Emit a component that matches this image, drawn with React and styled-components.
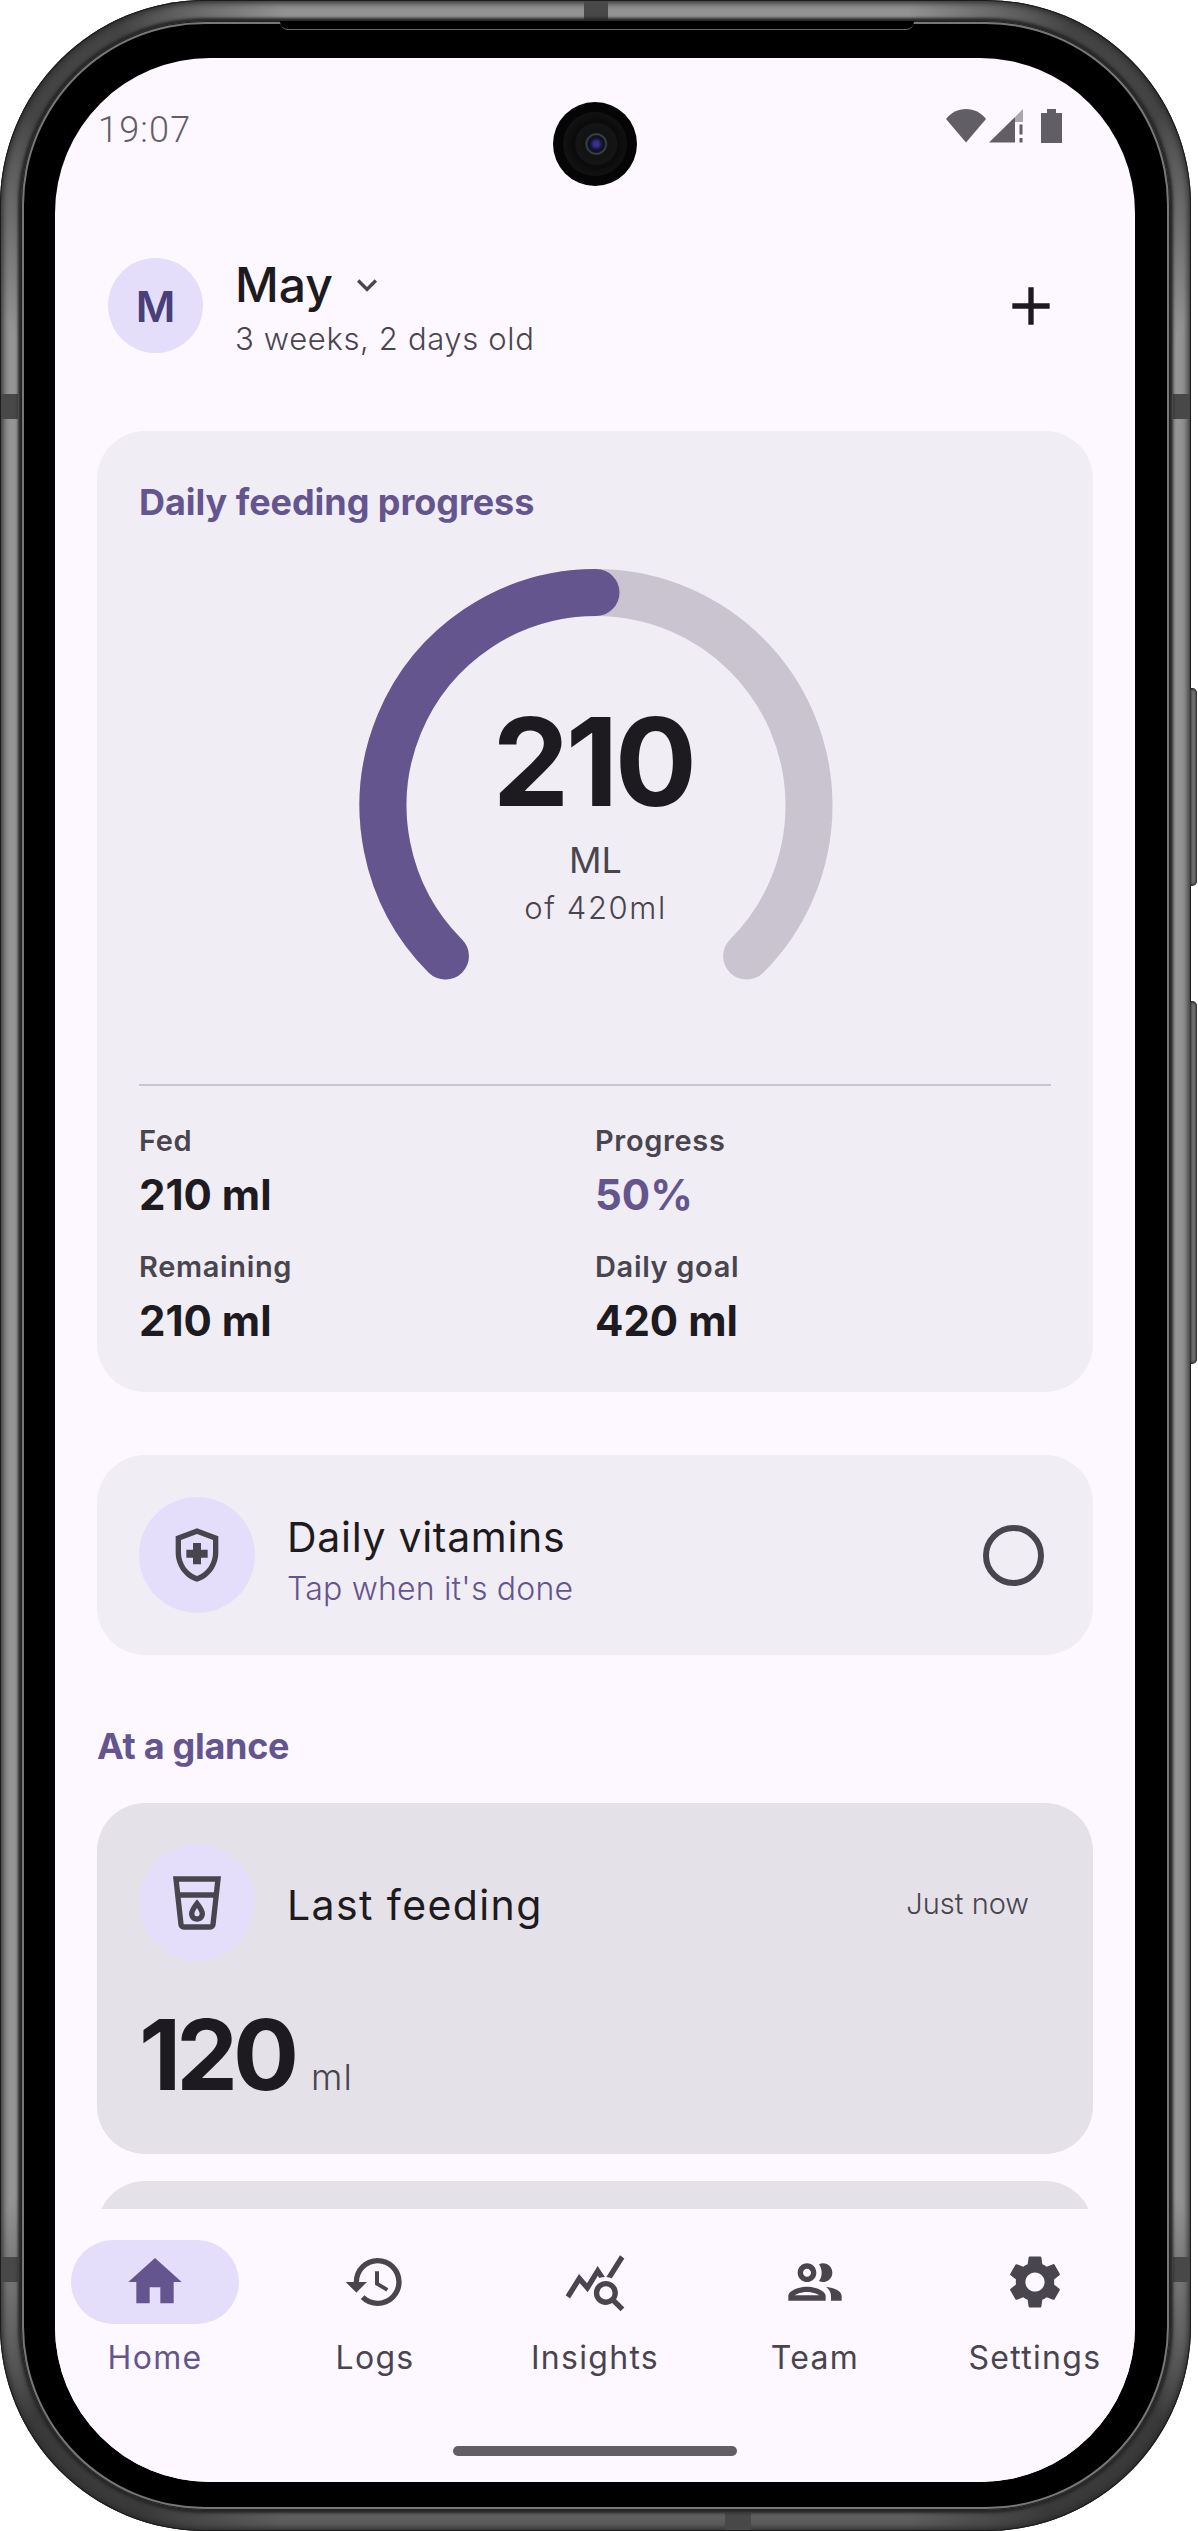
import React from "react";
import styled, { createGlobalStyle } from "styled-components";
import {
  MdAdd,
  MdExpandMore,
  MdHistory,
  MdHome,
  MdOutlineGroup,
  MdOutlineHealthAndSafety,
  MdOutlineLocalDrink,
  MdQueryStats,
  MdSettings,
} from "react-icons/md";

const INK = "#1d1b20";
const MUTED = "#49454f";
const PURPLE = "#65558f";
const TRACK = "#cac4d0";
const PALE = "#e5defa";
const SURFACE = "#fdf8ff";
const FONT = `"Inter", "Noto Sans", sans-serif`;

const GlobalStyle = createGlobalStyle`
  html, body {
    margin: 0;
    background: #fff;
  }
  body {
    font-family: ${FONT};
    color: ${INK};
  }
`;

const stats = [
  { label: "Fed", value: "210 ml" },
  { label: "Progress", value: "50%", accent: true },
  { label: "Remaining", value: "210 ml" },
  { label: "Daily goal", value: "420 ml" },
];

const tabs = [
  { label: "Home", Icon: MdHome, active: true },
  { label: "Logs", Icon: MdHistory },
  { label: "Insights", Icon: MdQueryStats },
  { label: "Team", Icon: MdOutlineGroup },
  { label: "Settings", Icon: MdSettings },
];

function StatusIcons() {
  return (
    <svg width="117" height="34" viewBox="0 0 117 34">
      <path d="M0 10C5 3.500 12 0 20 0s15 3.500 20 10L20 33.500z" fill="#625e66" />
      <path d="M43 33.500 69 8v25.500z" fill="#625e66" />
      <path d="M69 8l8-8v13h-8z" fill="#a9a6ac" />
      <path d="M73.500 15.500h3v10h-3zM73.500 29h3v4.500h-3z" fill="#625e66" />
      <path d="M101 0h9v4h6v30H95V4h6z" fill="#625e66" />
    </svg>
  );
}

function Gauge() {
  return (
    <svg width="474" height="412" viewBox="0 0 474 412">
      <path
        d="M86.400 387.100A213 213 0 1 1 387.600 387.100"
        fill="none"
        stroke={TRACK}
        strokeWidth="47"
        strokeLinecap="round"
      />
      <path
        d="M86.400 387.100A213 213 0 0 1 237 23.500"
        fill="none"
        stroke={PURPLE}
        strokeWidth="47"
        strokeLinecap="round"
      />
    </svg>
  );
}

export default function App() {
  return (
    <>
      <GlobalStyle />
      <Phone>
        <SideKey $top={688} $height={198} />
        <SideKey $top={1001} $height={363} />
        <Band $left={1} $top={394} $width={17} $height={25} />
        <Band $left={1173} $top={394} $width={17} $height={25} />
        <Band $left={1} $top={2257} $width={17} $height={25} />
        <Band $left={1173} $top={2257} $width={17} $height={25} />
        <Band $left={584} $top={1} $width={24} $height={19} />
        <Band $left={725} $top={2513} $width={26} $height={17} />
        <Bezel>
          <EarpieceLine />
          <Screen>
            <Camera>
              <Lens />
            </Camera>
            <StatusBar>
              <Clock>19:07</Clock>
              <StatusIcons />
            </StatusBar>
            <Content>
              <Header>
                <Avatar>M</Avatar>
                <BabyInfo>
                  <BabyName>
                    May
                    <MdExpandMore size={40} color={MUTED} />
                  </BabyName>
                  <BabyAge>3 weeks, 2 days old</BabyAge>
                </BabyInfo>
                <MdAdd size={64} color={INK} />
              </Header>

              <ProgressCard>
                <CardTitle>Daily feeding progress</CardTitle>
                <GaugeStack>
                  <Gauge />
                  <GaugeText>
                    <GaugeValue>210</GaugeValue>
                    <GaugeUnit>ML</GaugeUnit>
                    <GaugeGoal>of 420ml</GaugeGoal>
                  </GaugeText>
                </GaugeStack>
                <Divider />
                <StatGrid>
                  {stats.map((stat) => (
                    <div key={stat.label}>
                      <StatLabel>{stat.label}</StatLabel>
                      <StatValue $accent={stat.accent}>{stat.value}</StatValue>
                    </div>
                  ))}
                </StatGrid>
              </ProgressCard>

              <VitaminCard>
                <IconCircle>
                  <MdOutlineHealthAndSafety size={64} color={MUTED} />
                </IconCircle>
                <VitaminText>
                  <RowTitle $tracking={0.7}>Daily vitamins</RowTitle>
                  <VitaminHint>Tap when it's done</VitaminHint>
                </VitaminText>
                <Radio />
              </VitaminCard>

              <SectionTitle>At a glance</SectionTitle>

              <GlanceCard>
                <GlanceTop>
                  <IconCircle>
                    <MdOutlineLocalDrink size={64} color={MUTED} />
                  </IconCircle>
                  <FeedingTitle $tracking={1.4}>Last feeding</FeedingTitle>
                  <GlanceTime>Just now</GlanceTime>
                </GlanceTop>
                <GlanceAmount>
                  <GlanceNumber>120</GlanceNumber>
                  <GlanceUnit>ml</GlanceUnit>
                </GlanceAmount>
              </GlanceCard>
              <GlanceCard />
            </Content>

            <Nav>
              <TabRow>
                {tabs.map(({ label, Icon, active }) => (
                  <Tab key={label}>
                    <TabIcon $active={active}>
                      <Icon size={64} color={active ? PURPLE : MUTED} />
                    </TabIcon>
                    <TabLabel $active={active}>{label}</TabLabel>
                  </Tab>
                ))}
              </TabRow>
              <HomeBar />
            </Nav>
          </Screen>
        </Bezel>
      </Phone>
    </>
  );
}

const Phone = styled.div`
  position: relative;
  box-sizing: border-box;
  width: 1191px;
  height: 2531px;
  padding: 21px;
  border-radius: 205px;
  background: conic-gradient(
    #929292 0 14deg,
    #444 21deg 26deg,
    #949494 32deg 148deg,
    #3a3a3a 154deg 160deg,
    #5e5e5e 166deg 194deg,
    #3a3a3a 200deg 206deg,
    #949494 212deg 328deg,
    #444 334deg 339deg,
    #929292 346deg 360deg
  );
  box-shadow: inset 0 0 0 1px #1c1c1c, inset 0 0 6px 3px #2b2b2b;
`;

const SideKey = styled.div`
  position: absolute;
  left: 1190px;
  top: ${({ $top }) => $top}px;
  width: 7px;
  height: ${({ $height }) => $height}px;
  border-radius: 0 5px 5px 0;
  background: #777;
  box-shadow: inset 0 0 3px 1px #1c1c1c;
`;

const Band = styled.div`
  position: absolute;
  left: ${({ $left }) => $left}px;
  top: ${({ $top }) => $top}px;
  width: ${({ $width }) => $width}px;
  height: ${({ $height }) => $height}px;
  background: #484848;
`;

const Bezel = styled.div`
  position: relative;
  box-sizing: border-box;
  height: 100%;
  padding: 37px 35px 28px 34px;
  border-radius: 184px;
  background: #000;
  box-shadow: 0 0 3px 3px #262626, inset 0 0 0 1px #222, inset 0 0 0 3px #777;
`;

const EarpieceLine = styled.div`
  position: absolute;
  top: 0;
  left: 259px;
  width: 634px;
  height: 8px;
  background: #000;
  border-bottom: 1px solid #666;
  border-radius: 0 0 8px 8px;
`;

const Screen = styled.div`
  position: relative;
  display: flex;
  flex-direction: column;
  height: 100%;
  border-radius: 155px;
  background: ${SURFACE};
`;

const Camera = styled.div`
  position: absolute;
  top: 44px;
  left: 498px;
  display: flex;
  align-items: center;
  justify-content: center;
  width: 84px;
  height: 84px;
  border-radius: 50%;
  background: #050505;
`;

const Lens = styled.div`
  width: 64px;
  height: 64px;
  border-radius: 50%;
  background: radial-gradient(
    circle at 52% 50%,
    #3a2f8c 0 5%,
    #0d1128 14%,
    #10141e 18%,
    #41464a 21%,
    #121214 25%,
    #151515 44%,
    #0a0a0a 47%,
    #121212 70%
  );
`;

const StatusBar = styled.div`
  display: flex;
  flex-shrink: 0;
  align-items: flex-start;
  justify-content: space-between;
  box-sizing: border-box;
  height: 200px;
  padding: 51px 72px 0 43px;
`;

const Clock = styled.span`
  font-family: "Roboto", sans-serif;
  font-size: 36px;
  font-weight: 300;
  line-height: 42px;
  letter-spacing: 1.2px;
  color: #625e66;
`;

const Content = styled.div`
  flex: 1;
  min-height: 0;
  overflow: hidden;
  padding: 0 42px;
`;

const Header = styled.div`
  display: flex;
  align-items: center;
  height: 95px;
  padding: 0 30px 0 11px;
`;

const Avatar = styled.div`
  display: flex;
  align-items: center;
  justify-content: center;
  width: 95px;
  height: 95px;
  border-radius: 50%;
  background: ${PALE};
  color: #4a3f78;
  font-size: 43px;
  font-weight: 600;
`;

const BabyInfo = styled.div`
  flex: 1;
  margin-left: 32px;
`;

const BabyName = styled.div`
  display: flex;
  align-items: center;
  gap: 14px;
  height: 56px;
  font-size: 48px;
  font-weight: 500;
`;

const BabyAge = styled.div`
  margin-top: 6px;
  margin-bottom: -4px;
  font-size: 31px;
  font-weight: 300;
  line-height: 40px;
  letter-spacing: 0.65px;
  color: ${MUTED};
`;

const Card = styled.div`
  border-radius: 48px;
  background: #f1edf4;
`;

const ProgressCard = styled(Card)`
  margin-top: 78px;
  padding: 49px 42px 43px;
`;

const CardTitle = styled.div`
  font-size: 36px;
  font-weight: 700;
  line-height: 44px;
  letter-spacing: -0.05px;
  color: ${PURPLE};
`;

const GaugeStack = styled.div`
  display: grid;
  justify-content: center;
  margin-top: 45px;
  margin-left: 1px;
  & > * {
    grid-area: 1 / 1;
  }
`;

const GaugeText = styled.div`
  display: flex;
  flex-direction: column;
  align-items: center;
  padding-top: 132px;
`;

const GaugeValue = styled.div`
  margin-left: -5px;
  font-size: 122px;
  font-weight: 700;
  line-height: 122px;
  letter-spacing: -3.5px;
`;

const GaugeUnit = styled.div`
  margin-top: 15px;
  font-size: 36px;
  line-height: 44px;
  color: ${MUTED};
`;

const GaugeGoal = styled.div`
  margin-top: 6px;
  font-size: 31px;
  font-weight: 300;
  line-height: 40px;
  letter-spacing: 1.6px;
  color: ${MUTED};
`;

const Divider = styled.div`
  height: 2px;
  margin-top: 103px;
  background: ${TRACK};
`;

const StatGrid = styled.div`
  display: grid;
  grid-template-columns: 456px 1fr;
  row-gap: 24px;
  margin-top: 35px;
`;

const StatLabel = styled.div`
  font-size: 29px;
  font-weight: 600;
  line-height: 40px;
  letter-spacing: 0.65px;
  color: ${MUTED};
`;

const StatValue = styled.div`
  margin-top: 6px;
  font-size: 42px;
  font-weight: 700;
  line-height: 56px;
  color: ${({ $accent }) => ($accent ? PURPLE : INK)};
`;

const VitaminCard = styled(Card)`
  display: flex;
  align-items: center;
  height: 200px;
  margin-top: 63px;
  padding: 0 49px 0 42px;
`;

const IconCircle = styled.div`
  display: flex;
  flex-shrink: 0;
  align-items: center;
  justify-content: center;
  width: 116px;
  height: 116px;
  border-radius: 50%;
  background: ${PALE};
`;

const VitaminText = styled.div`
  flex: 1;
  margin-left: 32px;
  padding-top: 10px;
`;

const RowTitle = styled.div`
  font-size: 41px;
  line-height: 52px;
  letter-spacing: ${({ $tracking }) => $tracking}px;
`;

const FeedingTitle = styled(RowTitle)`
  margin: 3px 0 0 -1px;
`;

const VitaminHint = styled.div`
  margin-top: 6px;
  font-size: 32px;
  font-weight: 300;
  line-height: 40px;
  letter-spacing: 0.2px;
  color: ${PURPLE};
`;

const Radio = styled.div`
  box-sizing: border-box;
  width: 61px;
  height: 61px;
  border: 6px solid ${MUTED};
  border-radius: 50%;
`;

const SectionTitle = styled.div`
  margin-top: 69px;
  font-size: 36px;
  font-weight: 700;
  line-height: 44px;
  letter-spacing: -0.3px;
  color: ${PURPLE};
`;

const GlanceCard = styled(Card)`
  box-sizing: border-box;
  height: 351px;
  margin-top: 35px;
  padding: 42px;
  background: #e5e1e8;
  & + & {
    margin-top: 27px;
  }
`;

const GlanceTop = styled.div`
  display: flex;
  align-items: center;
  gap: 33px;
  padding-right: 22px;
`;

const GlanceTime = styled.div`
  margin-left: auto;
  font-size: 29px;
  font-weight: 300;
  color: ${MUTED};
`;

const GlanceAmount = styled.div`
  display: flex;
  align-items: baseline;
  gap: 17px;
  margin-top: 44px;
`;

const GlanceNumber = styled.div`
  font-size: 98px;
  font-weight: 700;
  line-height: 100px;
  letter-spacing: -5px;
`;

const GlanceUnit = styled.div`
  font-size: 36px;
  font-weight: 300;
  letter-spacing: 1px;
  color: ${MUTED};
`;

const Nav = styled.div`
  flex-shrink: 0;
  display: flex;
  flex-direction: column;
  align-items: center;
  box-sizing: border-box;
  height: 273px;
  padding-top: 31px;
  border-radius: 0 0 155px 155px;
  background: ${SURFACE};
`;

const TabRow = styled.div`
  display: grid;
  grid-template-columns: repeat(5, 220px);
`;

const Tab = styled.div`
  display: flex;
  flex-direction: column;
  align-items: center;
`;

const TabIcon = styled.div`
  display: flex;
  align-items: center;
  justify-content: center;
  width: 168px;
  height: 84px;
  border-radius: 42px;
  background: ${({ $active }) => ($active ? PALE : "transparent")};
`;

const TabLabel = styled.div`
  margin-top: 14px;
  font-size: 32px;
  line-height: 40px;
  letter-spacing: 1.3px;
  color: ${({ $active }) => ($active ? PURPLE : MUTED)};
`;

const HomeBar = styled.div`
  width: 284px;
  height: 10px;
  margin-top: 68px;
  border-radius: 5px;
  background: #625e66;
`;
